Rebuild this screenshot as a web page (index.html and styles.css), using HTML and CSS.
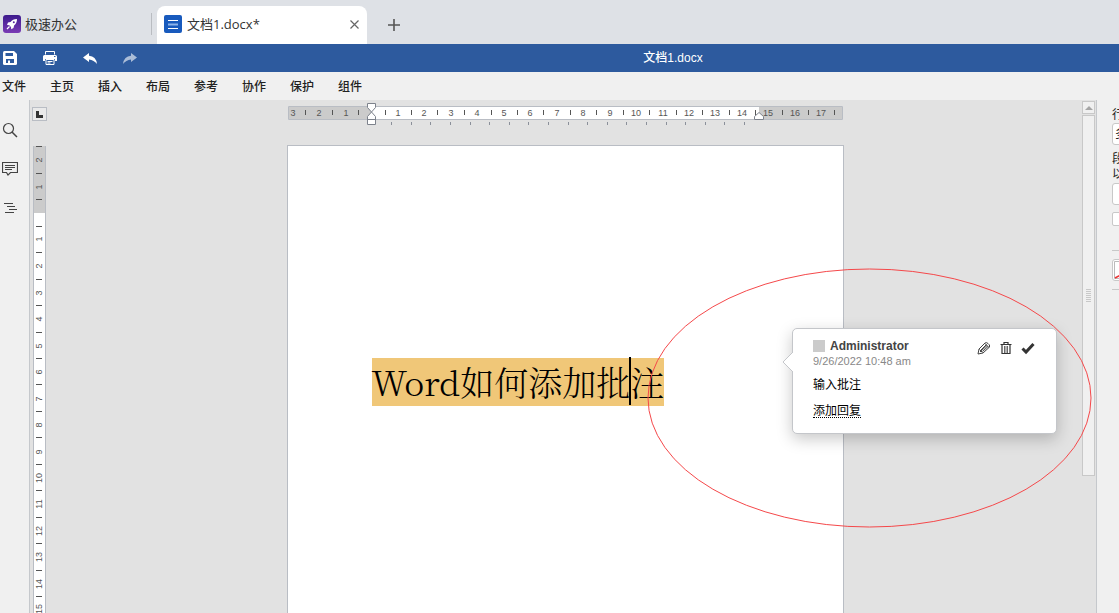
FILE: index.html
```html
<!DOCTYPE html>
<html lang="zh-CN">
<head>
<meta charset="utf-8">
<title>文档1.docx</title>
<link rel="stylesheet" href="styles.css">
</head>
<body>
<header class="tabs">
  <a class="home-tab" href="#home">
    <svg class="app-icon" viewBox="0 0 18 18"><defs><linearGradient id="violet" x2="0" y2="1"><stop stop-color="#3c1a8c"/><stop offset="1" stop-color="#7a3bb5"/></linearGradient></defs><rect width="18" height="18" rx="3" fill="url(#violet)"/><path d="M14 4c-3 0-5 1-6.500 3L5 7.500 4 10l2.200.2 1.800 1.800.2 2.200 2.300-1.200.6-2.500C13 9 14 7 14 4z" fill="#fff"/><circle cx="10.800" cy="7.300" r="1" fill="#5a2aa0"/><path d="M4 14l2.500-2.500" stroke="#fff" stroke-width="1.300"/></svg>
    <span>极速办公</span>
  </a>
  <div class="doc-tab">
    <svg class="app-icon" viewBox="0 0 18 18"><rect width="18" height="18" rx="2" fill="#185abd"/><path d="M4 5.500h10M4 13.500h10" stroke="#fff"/><path d="M4 9.500h10" stroke="#8db4ea" stroke-width="2"/></svg>
    <span class="doc-name">文档1.docx*</span>
    <button class="close" aria-label="关闭"><svg width="9" height="9" viewBox="0 0 9 9"><path d="M.5.5l8 8M8.500.5l-8 8" stroke="#666" stroke-width="1.200"/></svg></button>
  </div>
  <button class="new-tab" aria-label="新建"><svg width="12" height="12" viewBox="0 0 12 12"><path d="M6 0v12M0 6h12" stroke="#555" stroke-width="1.600"/></svg></button>
</header>

<div class="titlebar">
  <div class="quick">
    <button aria-label="保存"><svg width="14" height="14" viewBox="0 0 14 14"><path d="M1.500 0h9.500L14 3v9.500q0 1.500-1.500 1.500h-11Q0 14 0 12.500v-11Q0 0 1.500 0z" fill="#fff"/><path d="M2.500 2h7.500v3H2.500zM3 8h8v4H7V9.500H5V12H3z" fill="#2d5a9e"/></svg></button>
    <button aria-label="打印"><svg width="14" height="14" viewBox="0 0 14 14"><path d="M2.500 3.500v-3h9v3" fill="none" stroke="#fff"/><path d="M1.500 4h11q1.500 0 1.500 1.500V10h-2V8H2v2H0V5.500Q0 4 1.500 4z" fill="#fff"/><path d="M3 8.500h8v5H3zM4.500 10.500h5M4.500 12h3" fill="none" stroke="#fff"/><path d="M11 5.500h1.500" stroke="#2d5a9e"/></svg></button>
    <button aria-label="撤销"><svg width="14" height="11" viewBox="0 0 14 11"><path d="M0 4.500L6 0v2.700q7 .3 8 8.300Q11 7 6 6.500V9z" fill="#fff"/></svg></button>
    <button class="dim" aria-label="重做"><svg width="14" height="11" viewBox="0 0 14 11"><path d="M14 4.500L8 0v2.700Q1 3 0 11 3 7 8 6.500V9z" fill="#fff"/></svg></button>
  </div>
  <h1 class="title">文档1.docx</h1>
</div>

<nav class="menu">
  <button>文件</button><button>主页</button><button>插入</button><button>布局</button><button>参考</button><button>协作</button><button>保护</button><button>组件</button>
</nav>

<main class="workspace">
  <aside class="rail">
    <button aria-label="查找"><svg width="16" height="16" viewBox="0 0 16 16"><circle cx="6.500" cy="6.500" r="5" fill="none" stroke="#444" stroke-width="1.200"/><path d="M10 10l5 5" stroke="#444" stroke-width="1.500"/></svg></button>
    <button aria-label="批注"><svg width="16" height="16" viewBox="0 0 16 16"><path d="M.5 1.500h15v10H8.500L6 14l-1.500-2.500h-4zM3 4.500h10M3 6.500h10M3 8.500h7" fill="none" stroke="#444" stroke-width="1.200"/></svg></button>
    <button aria-label="导航"><svg width="16" height="16" viewBox="0 0 16 16"><path d="M2 3.500h9M5 6.500h8M7 9.500h8M3 12.500h9" stroke="#444" stroke-width="1.200"/></svg></button>
  </aside>

  <div class="side-ruler">
    <button class="tab-stop" aria-label="制表符"><svg width="7" height="7" viewBox="0 0 7 7"><path d="M1.500 0v5.500H7" fill="none" stroke="#333" stroke-width="3"/></svg></button>
    <div class="vruler">
      <svg width="13" height="500" viewBox="0 0 13 500">
        <path d="M0 0h13v67H0z" fill="#cbcbcb"/>
        <path d="M0 67h13v433H0z" fill="#fff"/>
        <path d="M.5 0v500M12.500 0v500" stroke="#b9bdc4"/>
        <path class="tick" d="M3 .5h6M3 27.500h6M3 53.500h6M3 80.500h6M3 106.500h6M3 133.500h6M3 159.500h6M3 186.500h6M3 212.500h6M3 238.500h6M3 265.500h6M3 291.500h6M3 318.500h6M3 344.500h6M3 371.500h6M3 397.500h6M3 424.500h6M3 450.500h6"/>
        <g class="numbers">
          <text transform="translate(9 14) rotate(-90)">2</text><text transform="translate(9 41) rotate(-90)">1</text>
          <text transform="translate(9 93) rotate(-90)">1</text><text transform="translate(9 120) rotate(-90)">2</text><text transform="translate(9 147) rotate(-90)">3</text><text transform="translate(9 173) rotate(-90)">4</text><text transform="translate(9 200) rotate(-90)">5</text><text transform="translate(9 226) rotate(-90)">6</text><text transform="translate(9 253) rotate(-90)">7</text><text transform="translate(9 279) rotate(-90)">8</text><text transform="translate(9 306) rotate(-90)">9</text><text transform="translate(9 332) rotate(-90)">10</text><text transform="translate(9 358) rotate(-90)">11</text><text transform="translate(9 385) rotate(-90)">12</text><text transform="translate(9 411) rotate(-90)">13</text><text transform="translate(9 438) rotate(-90)">14</text><text transform="translate(9 463) rotate(-90)">15</text>
        </g>
      </svg>
    </div>
  </div>

  <section class="canvas">
    <svg class="hruler" width="556" height="24" viewBox="0 0 556 24">
      <path d="M.5 4.500h554v13H.5z" fill="#fff" stroke="#b9bdc4"/>
      <path d="M1 5h82v12H1zM471 5h83v12h-83z" fill="#cbcbcb"/>
      <path class="tick" d="M17.500 8v5M44.500 8v5M70.500 8v5M97.500 8v5M123.500 8v5M149.500 8v5M176.500 8v5M203.500 8v5M229.500 8v5M255.500 8v5M282.500 8v5M308.500 8v5M335.500 8v5M361.500 8v5M388.500 8v5M414.500 8v5M441.500 8v5M467.500 8v5M494.500 8v5M520.500 8v5M546.500 8v5"/>
      <path d="M103.500 20v3M123.500 20v3M142.500 20v3M162.500 20v3M182.500 20v3M201.500 20v3M221.500 20v3M240.500 20v3M260.500 20v3M280.500 20v3M299.500 20v3M319.500 20v3M338.500 20v3M358.500 20v3M378.500 20v3M397.500 20v3M417.500 20v3M436.500 20v3M456.500 20v3" stroke="#8b909a"/>
      <g class="numbers">
        <text x="5" y="14">3</text><text x="31" y="14">2</text><text x="58" y="14">1</text>
        <text x="110" y="14">1</text><text x="136" y="14">2</text><text x="163" y="14">3</text><text x="189" y="14">4</text><text x="216" y="14">5</text><text x="242" y="14">6</text><text x="269" y="14">7</text><text x="295" y="14">8</text><text x="322" y="14">9</text><text x="348" y="14">10</text><text x="375" y="14">11</text><text x="401" y="14">12</text><text x="427" y="14">13</text><text x="454" y="14">14</text><text x="480" y="14">15</text><text x="507" y="14">16</text><text x="533" y="14">17</text>
      </g>
      <path d="M79.500 1.500h8v4l-4 4.500-4-4.500zM83.500 10l4 4.500v8h-8v-8zM79.500 17.500h8M466.500 17.500v-3l4.500-4 4.500 4v3z" fill="#fff" stroke="#7d828c"/>
    </svg>
    <article class="page">
      <p class="line"><mark>Word如何添加批<span class="caret"></span>注</mark></p>
    </article>
    <section class="comment">
      <svg class="pointer" width="11" height="20" viewBox="0 0 11 20"><path d="M11 0L1 10l10 10" fill="#fff" stroke="#c4c6ca"/></svg>
      <div class="comment-head">
        <span class="swatch"></span><strong class="author">Administrator</strong>
        <div class="actions">
          <button aria-label="编辑"><svg width="14" height="14" viewBox="0 0 14 14"><path d="M1 13l1-5 6-6q1.500-1 3 .5l1 1q1.500 1.500 0 3l-6 5.500zM3 11l7-6.500M2.500 8.500l3 3M4 9l5.500-5.500M5.500 10.500l5.500-5M8 2.500l4 4" fill="none" stroke="#444"/></svg></button>
          <button aria-label="删除"><svg width="14" height="14" viewBox="0 0 14 14"><path d="M1.500 3.500h11M5 3V1.500h4V3M3 4v8.500h8V4" fill="none" stroke="#333" stroke-width="1.200"/><path d="M5.500 5v7M7 5v7M8.500 5v7" stroke="#444" stroke-width=".8"/></svg></button>
          <button aria-label="解决"><svg width="14" height="14" viewBox="0 0 14 14"><path d="M1.500 7.500l3.500 3.500 7.500-8" fill="none" stroke="#333" stroke-width="3"/></svg></button>
        </div>
      </div>
      <time class="date">9/26/2022 10:48 am</time>
      <p class="comment-text">输入批注</p>
      <a class="reply" href="#reply">添加回复</a>
    </section>
    <svg class="ellipse" width="445" height="261" viewBox="0 0 445 261"><ellipse cx="222.500" cy="130" rx="221.500" ry="129" fill="none" stroke="#f5484a"/></svg>
  </section>

  <div class="scrollbar">
    <button class="scroll-up" aria-label="向上滚动"><svg width="8" height="4" viewBox="0 0 8 4"><path d="M0 4l4-4 4 4z" fill="#a5a5a5"/></svg></button>
    <div class="thumb"><svg width="5" height="14" viewBox="0 0 5 14"><path d="M0 .5h5M0 2.500h5M0 4.500h5M0 6.500h5M0 8.500h5M0 10.500h5M0 12.500h5" stroke="#c8c8c8"/></svg></div>
  </div>

  <aside class="settings">
    <label for="spacing">行</label>
    <select id="spacing"><option>多</option></select>
    <label class="group" for="before">段</label>
    <label for="before">以</label>
    <input class="field" id="before" type="text">
    <input class="check" type="checkbox" aria-label="不添加间隔">
    <hr>
    <button class="no-fill" aria-label="背景颜色"><svg width="20" height="18" viewBox="0 0 20 18"><path d="M.5.5h19v17H.5z" fill="#fff" stroke="#bbb"/><path d="M1 17L19 7" stroke="#e33" stroke-width="1.500"/></svg></button>
    <hr>
  </aside>
</main>
</body>
</html>
```
FILE: styles.css
```css
* { box-sizing: border-box; }
body {
  margin: 0;
  height: 100vh;
  display: flex;
  flex-direction: column;
  overflow: hidden;
  background: #e2e2e2;
  color: #222;
  font: 12px/16px "Liberation Sans", "Noto Sans CJK SC", sans-serif;
}
button { display: flex; align-items: center; justify-content: center; padding: 0; border: 0; background: none; color: inherit; font: inherit; }
svg { display: block; flex: none; }

.tabs {
  display: flex;
  align-items: flex-end;
  height: 44px;
  flex: none;
  background: #dee1e6;
  color: #333;
  font: 13px/20px "Open Sans", "Noto Sans CJK SC", sans-serif;
}
.app-icon { width: 18px; height: 18px; }
.home-tab { display: flex; align-items: center; gap: 4px; width: 152px; height: 22px; margin: 0 5px 9px 0; padding-left: 3px; border-right: 1px solid #b9bcc1; color: inherit; text-decoration: none; }
.doc-tab { display: flex; align-items: center; gap: 5px; width: 210px; height: 38px; padding: 0 8px 2px 7px; border-radius: 8px 8px 0 0; background: #fff; }
.doc-name { flex: 1; }
.new-tab { width: 54px; height: 38px; }

.titlebar { position: relative; display: flex; align-items: center; justify-content: center; height: 28px; flex: none; background: #2d5a9e; }
.quick { position: absolute; left: 3px; display: flex; gap: 26px; }
.quick .dim { opacity: 0.6; }
.title { margin: 0; padding-left: 227px; color: #fff; font-size: 12px; font-weight: 500; }

.menu { display: flex; gap: 24px; height: 28px; flex: none; padding-left: 2px; background: #f0f0f0; font-family: "Noto Sans CJK SC", sans-serif; font-weight: 500; }

.workspace { display: flex; flex: 1; min-height: 0; }
.rail { display: flex; flex-direction: column; gap: 23px; width: 30px; flex: none; padding: 22px 0 0 2px; border-right: 1px solid #c5c8cc; background: #f0f0f0; }
.rail button { width: 16px; height: 16px; }
.side-ruler { display: flex; flex-direction: column; width: 18px; flex: none; padding: 7px 0 0 2px; }
.tab-stop { width: 15px; height: 14px; flex: none; border: 1px solid #b9bdc4; background: #eaeaea; }
.vruler { flex: 1; min-height: 0; margin: 25px 0 0 1px; overflow: hidden; }
.tick { stroke: #555; }
.numbers { fill: #555; font-size: 9px; text-anchor: middle; }

.canvas { position: relative; display: flex; flex-direction: column; align-items: center; flex: 1; }
.hruler { margin: 2px 0 0 2px; }
.page { width: 557px; flex: 1; margin-top: 19px; padding: 212px 83px 0 84px; border: 1px solid #b9bdc4; border-bottom: 0; background: #fff; color: #000; }
.line { margin: 0; font: 300 34px/48px "Noto Serif CJK SC", "Noto Sans CJK SC", serif; white-space: nowrap; }
.line mark { display: inline-flex; height: 48px; background: #f0c778; color: inherit; }
.caret { width: 2px; height: 48px; margin: -1px -1px 0; background: #000; }

.comment { position: absolute; left: calc(50% + 227px); top: 228px; width: 265px; height: 106px; padding: 9px 20px; border: 1px solid #c4c6ca; border-radius: 5px; background: #fff; box-shadow: 0 5px 16px rgba(0, 0, 0, 0.22); }
.pointer { position: absolute; left: -11px; top: 23px; }
.comment-head { display: flex; align-items: center; height: 15px; gap: 5px; }
.swatch { width: 12px; height: 12px; background: #cbcbcb; }
.author { flex: 1; color: #444; }
.actions { display: flex; gap: 8px; padding: 4px 1px 0 0; }
.date { display: block; height: 16px; color: #888; font-size: 11px; }
.comment-text { margin: 8px 0 10px; color: #000; }
.reply { display: inline-block; height: 15px; border-bottom: 1px dotted #000; color: #000; text-decoration: none; }
.ellipse { position: absolute; left: calc(50% + 82px); top: 168px; pointer-events: none; }

.scrollbar { width: 14px; flex: none; padding: 1px 1px 0 0; }
.scroll-up { width: 13px; height: 13px; border: 1px solid #c8c8c8; background: #f0f0f0; }
.thumb { display: flex; align-items: center; justify-content: center; width: 13px; height: 361px; margin-top: 1px; border: 1px solid #c8c8c8; background: #f0f0f0; }

.settings { width: 23px; flex: none; padding: 8px 0 0 15px; overflow: hidden; border-left: 1px solid #c5c8cc; background: #f0f0f0; }
.settings label { display: block; height: 15px; line-height: 15px; }
.settings .group { margin-top: 7px; }
.settings select, .field { display: block; width: 60px; height: 22px; padding: 0 2px; border: 1px solid #c8c8c8; border-radius: 3px; background: #fff; font: inherit; appearance: none; }
.field { margin-top: 1px; }
.check { display: block; width: 13px; height: 14px; margin: 7px 0 24px; border: 1px solid #c8c8c8; border-radius: 2px; background: #fff; appearance: none; }
.settings hr { width: 60px; margin: 0; border: 0; border-top: 1px solid #c8c8c8; }
.no-fill { width: 60px; height: 22px; margin: 8px 0; padding-left: 1px; justify-content: flex-start; border: 1px solid #c8c8c8; border-radius: 3px; background: #fff; }
```
